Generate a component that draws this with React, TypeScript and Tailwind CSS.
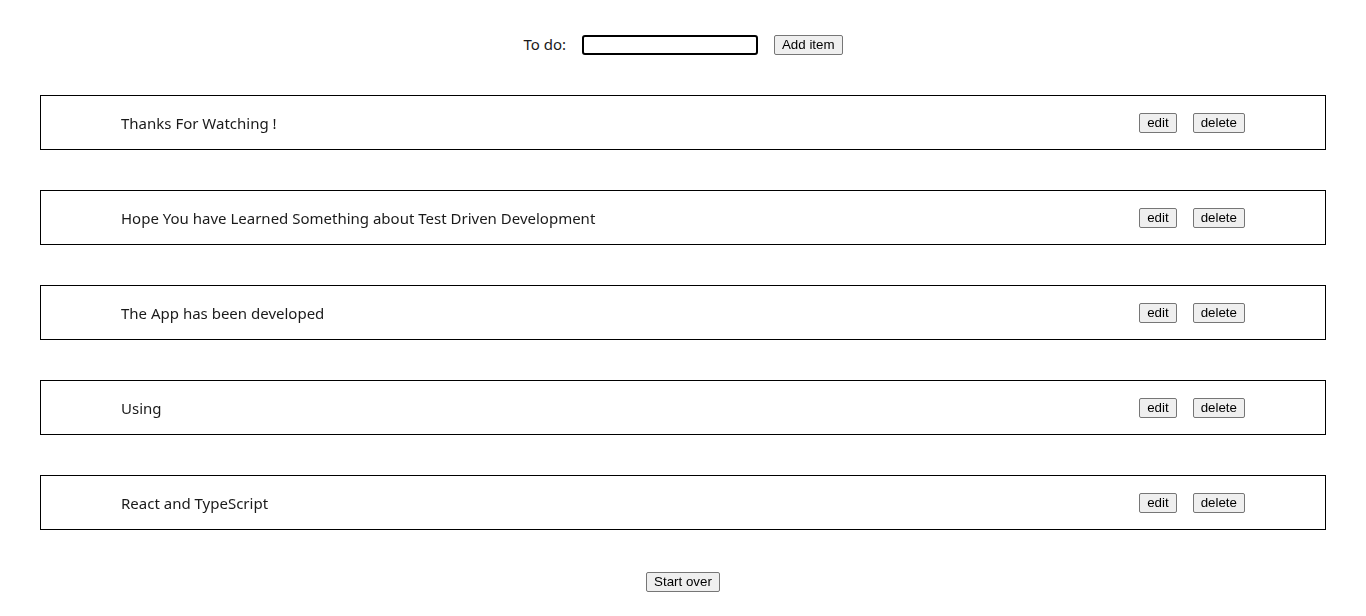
import { useState } from "react";

const items = [
  "Thanks For Watching !",
  "Hope You have Learned Something about Test Driven Development",
  "The App has been developed",
  "Using",
  "React and TypeScript",
];

const btn =
  "h-[20px] px-[7px] rounded-[2px] border border-[#767676] bg-[#efefef] text-[13.33px] leading-none text-black [font-family:'Liberation_Sans',Arial,sans-serif]";

export default function App() {
  const [todos] = useState(items);
  const [text, setText] = useState("");

  return (
    <main className="min-h-screen bg-white px-[40px] pt-[34px] text-[#1a1a1a] [font-family:'Noto_Sans',sans-serif]">
      <div className="flex items-center justify-center h-[21px]">
        <label className="text-[15px] mr-[16px]">To do:</label>
        <input
          autoFocus
          value={text}
          onChange={(e) => setText(e.target.value)}
          className="w-[176px] h-[20px] border-2 border-black rounded-[3px] px-[2px] text-[13px] outline-none"
        />
        <button type="button" className={btn + " ml-[16px]"}>
          Add item
        </button>
      </div>

      <ul className="mt-[40px] flex flex-col gap-[40px]">
        {todos.map((t) => (
          <li
            key={t}
            className="h-[55px] border border-black flex items-center justify-between pl-[80px] pr-[80px]"
          >
            <span className="text-[15px] mt-[2px]">{t}</span>
            <div className="flex items-center gap-[16px]">
              <button type="button" className={btn}>
                edit
              </button>
              <button type="button" className={btn}>
                delete
              </button>
            </div>
          </li>
        ))}
      </ul>

      <div className="flex justify-center mt-[42px]">
        <button type="button" className={btn}>
          Start over
        </button>
      </div>
    </main>
  );
}
